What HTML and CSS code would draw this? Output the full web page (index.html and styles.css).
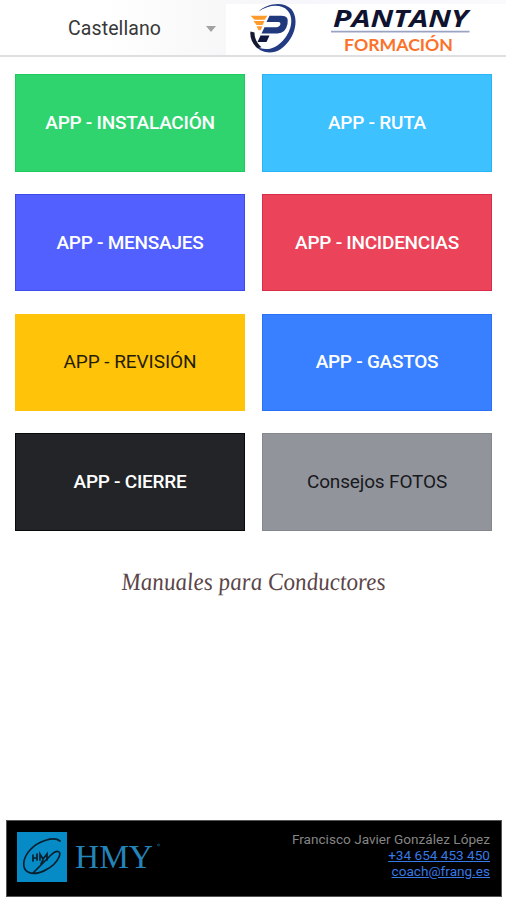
FILE: index.html
```html
<!DOCTYPE html>
<html lang="es">
<head>
  <meta charset="UTF-8">
  <meta name="viewport" content="width=device-width, initial-scale=1.0">
  <title>Manuales para Conductores</title>
  <link rel="stylesheet" href="styles.css">
</head>
<body>

  <header class="topbar">
    <div class="language">
      <span class="language-name">Castellano</span>
      <span class="arrow"></span>
    </div>
    <div class="brand">
      <svg class="brand-logo" viewBox="0 0 280 51" role="img" aria-label="Pantany Formación">
        <g transform="translate(14.5 -2) scale(1 1.05)">
          <path d="M18 9C27 1 43-1 51 7C60 18 53 37 40 45C32 50 21 49 15 42C24 47 34 45 41 38C51 29 54 15 47 8C41 2 29 2 18 9Z" fill="#233b82"/>
          <path d="M10 28L14 29C14 34 16 39 21 43L17 44C12 40 9 34 10 28Z" fill="#151a33"/>
          <path d="M10 13H27L24 17H14ZM13 18H24L22 22H16ZM16 23H22L20 27H18Z" fill="#ff9b2b"/>
          <path d="M29 13H41Q49 13 47 21Q45 30 37 30H21L24 24H36Q39 24 40 21Q40 19 38 19H26Z" fill="#20397d"/>
          <path d="M20 32H29L26 38H17Z" fill="#11183f"/>
        </g>
        <text class="brand-name" x="107" y="22.5" textLength="135" lengthAdjust="spacingAndGlyphs">PANTANY</text>
        <path d="M105 27.7H243.5" stroke="#9ba3c3" stroke-width="1.8"/>
        <text class="brand-sub" x="118" y="46.5" textLength="109" lengthAdjust="spacingAndGlyphs">FORMACIÓN</text>
      </svg>
    </div>
  </header>

  <main>
    <div class="grid">
      <a class="card green">APP - INSTALACIÓN</a>
      <a class="card sky">APP - RUTA</a>
      <a class="card indigo">APP - MENSAJES</a>
      <a class="card red">APP - INCIDENCIAS</a>
      <a class="card yellow">APP - REVISIÓN</a>
      <a class="card blue">APP - GASTOS</a>
      <a class="card dark">APP - CIERRE</a>
      <a class="card gray">Consejos FOTOS</a>
    </div>
    <svg class="tagline" viewBox="0 0 300 40">
      <text transform="translate(18 24) skewX(5)" textLength="264" lengthAdjust="spacingAndGlyphs">Manuales para Conductores</text>
    </svg>
  </main>

  <footer class="footer">
    <svg class="hmy" viewBox="0 0 146 50" role="img" aria-label="HMY">
      <rect width="50" height="50" fill="#078bc7"/>
      <g fill="none" stroke="#08202e" stroke-width="1.7" stroke-linecap="round">
        <path d="M43 9C37 4 21 9 13 18C5 27 5 37 11 40C20 45 38 35 42 25C45 18 39 18 34 23L16 41"/>
        <path d="M16 23V29M20 22V28M16 26H20M23 28V22L26 27L30 22V28M26 28L24 32"/>
      </g>
      <text class="hmy-name" x="58" y="36" textLength="78" lengthAdjust="spacingAndGlyphs">HMY</text>
      <circle cx="141.5" cy="13" r="1" fill="none" stroke="#175c80" stroke-width=".8"/>
    </svg>
    <div class="contact">
      <span class="contact-name">Francisco Javier González López</span>
      <a class="phone" href="tel:+34654453450">+34 654 453 450</a>
      <a class="mail" href="mailto:coach@frang.es">coach@frang.es</a>
    </div>
  </footer>

</body>
</html>
```
FILE: styles.css
```css
* {
  box-sizing: border-box;
  margin: 0;
  padding: 0;
}

body {
  display: flex;
  flex-direction: column;
  height: 100vh;
  font-family: Roboto, sans-serif;
  background: #fff;
}

.topbar {
  display: flex;
  height: 57px;
  border-bottom: 2px solid #dfdfe1;
  background: linear-gradient(90deg, #fff 20%, #f8f8f9 42%, #f6f6fc 60%, #fafafd);
}

.language {
  display: flex;
  align-items: center;
  justify-content: space-between;
  width: 226px;
  padding: 2px 10px 0 68px;
}

.language-name {
  font-size: 19.5px;
  letter-spacing: 0.1px;
  color: #383838;
}

.arrow {
  border: 5.5px solid transparent;
  border-top: 6px solid #a2a2a2;
  border-bottom: 0;
}

.brand {
  width: 280px;
  padding-top: 4px;
}

.brand-logo {
  display: block;
  width: 280px;
  height: 51px;
  background: #fff;
  overflow: visible;
}

.brand-name {
  font: italic 700 23px "Open Sans", sans-serif;
  fill: #101330;
}

.brand-sub {
  font: 700 17px Lato, sans-serif;
  fill: #fb722a;
}

main {
  flex: 1;
  padding: 17px 14px 0 15px;
}

.grid {
  display: grid;
  grid-template-columns: 1fr 1fr;
  grid-auto-rows: 97.6px;
  gap: 22.2px 17px;
}

.card {
  display: flex;
  align-items: center;
  justify-content: center;
  padding-bottom: 1px;
  font-size: 19px;
  font-weight: 500;
  letter-spacing: -0.25px;
  color: #fff;
  border: 1px solid transparent;
}

.green {
  background: #2fd46f;
  border-color: #1fca60;
}

.sky {
  background: #3dc1ff;
  border-color: #27b5f8;
}

.indigo {
  background: #5260ff;
  border-color: #3e4bea;
}

.red {
  background: #eb445a;
  border-color: #d92d47;
}

.yellow {
  background: #ffc409;
  font-weight: 400;
  letter-spacing: -0.05px;
  color: #251d04;
}

.blue {
  background: #3880ff;
  border-color: #2871f4;
}

.dark {
  background: #222428;
  border-color: #08090b;
}

.gray {
  background: #92949c;
  border-color: #85878f;
  font-weight: 400;
  letter-spacing: -0.15px;
  color: #18191c;
}

.tagline {
  display: block;
  width: 300px;
  height: 40px;
  margin: 35px auto 0;
  font: italic 400 25px "Liberation Serif", serif;
  fill: #5a4547;
  overflow: visible;
}

.footer {
  display: flex;
  justify-content: space-between;
  height: 77px;
  margin: 0 4px 3px 6px;
  padding: 11px 11px 12px 10px;
  background: #000;
  border: 1px solid #555;
}

.hmy {
  width: 146px;
  height: 50px;
}

.hmy-name {
  font: 34px "Liberation Serif", serif;
  fill: #2384b9;
}

.contact {
  display: flex;
  flex-direction: column;
  align-items: flex-end;
  margin-top: -1px;
  font-size: 13.6px;
  line-height: 16px;
  color: #858585;
}

.contact a {
  color: #3779e5;
}
```
